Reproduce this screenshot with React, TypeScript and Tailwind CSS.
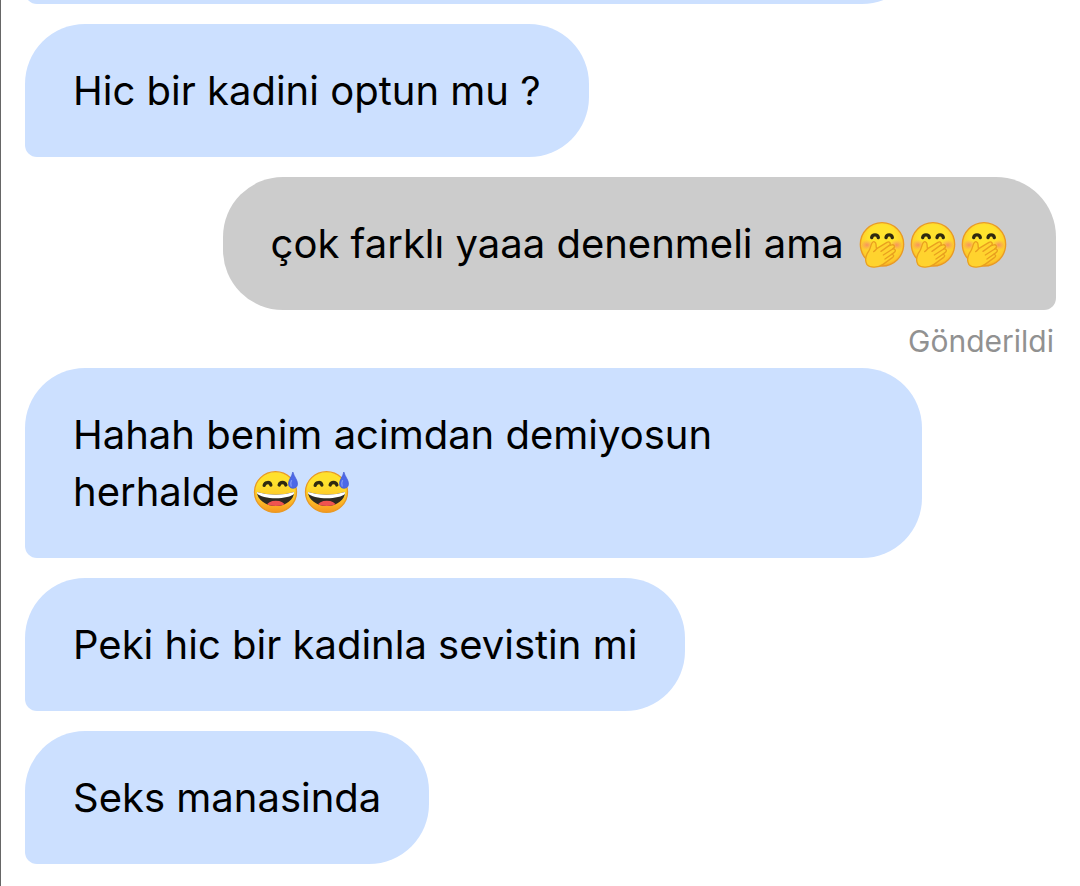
import { ReactNode } from "react"

const Eyes = ({ left, right }: { left: string; right: string }) => (
  <g fill="none" stroke="#2f2a10" strokeWidth="10" strokeLinecap="round">
    <path d={left} />
    <path d={right} />
  </g>
)

const Giggle = () => (
  <svg className="mb-1 inline-block h-[46px] w-[51px] pl-1 pr-px align-middle" viewBox="0 0 138 138" role="img" aria-label="🤭">
    <defs>
      <radialGradient id="giggle-face" cx="50%" cy="38%" r="64%">
        <stop offset="0.5" stopColor="#ffe22e" />
        <stop offset="0.85" stopColor="#fdc82b" />
        <stop offset="1" stopColor="#f8a51f" />
      </radialGradient>
      <radialGradient id="giggle-blush">
        <stop offset="0" stopColor="#f5806a" stopOpacity="0.8" />
        <stop offset="1" stopColor="#f5906a" stopOpacity="0" />
      </radialGradient>
    </defs>
    <circle cx="69" cy="67" r="65" fill="url(#giggle-face)" stroke="#e99a24" strokeWidth="4" />
    <ellipse cx="24" cy="69" rx="20" ry="16" fill="url(#giggle-blush)" />
    <ellipse cx="113" cy="69" rx="20" ry="16" fill="url(#giggle-blush)" />
    <Eyes left="M38 47C40 36 56 36 58 47" right="M81 47C83 36 98 36 100 47" />
    <path
      d="M24 128C17 116 21 99 30 86C35 78 35 70 39 63C43 56 51 59 51 67C52 74 51 77 53 80L84 61C91 57 98 65 90 71L97 69C105 66 110 74 103 79L101 81C109 79 112 87 105 92L98 97C105 97 106 103 100 107L72 127C58 137 34 139 24 128Z"
      fill="#ffd32e"
      stroke="#e9a01f"
      strokeWidth="4"
      strokeLinejoin="round"
    />
    <path d="M53 80C50 84 48 87 44 89M90 71L66 88M101 81L73 99M98 97L78 111" fill="none" stroke="#e9a01f" strokeWidth="4" strokeLinecap="round" />
  </svg>
)

const Sweat = () => (
  <svg className="mb-1 inline-block h-[46px] w-[51px] px-[2px] align-middle" viewBox="0 0 138 138" role="img" aria-label="😅">
    <defs>
      <linearGradient id="sweat-face" x1="0" y1="0" x2="0" y2="1">
        <stop offset="0.3" stopColor="#ffe12d" />
        <stop offset="0.65" stopColor="#fdc42a" />
        <stop offset="1" stopColor="#f7961e" />
      </linearGradient>
      <clipPath id="sweat-mouth">
        <path d="M10 66Q67 83 122 66C121 89 98 108 67 108S12 89 10 66Z" />
      </clipPath>
    </defs>
    <ellipse cx="66" cy="66" rx="63" ry="61" fill="url(#sweat-face)" stroke="#e99a24" strokeWidth="4" />
    <Eyes left="M32 46C35 35 50 35 52 45" right="M77 45C80 35 94 35 97 45" />
    <g clipPath="url(#sweat-mouth)">
      <rect x="8" y="58" width="118" height="54" fill="#2d2922" />
      <path d="M8 58H126V69C105 90 29 90 8 69Z" fill="#fff" />
      <ellipse cx="67" cy="107" rx="27" ry="15" fill="#ef5350" />
    </g>
    <path d="M118 6C122 21 133 30 132 43C131 59 106 59 105 43C104 30 115 21 118 6Z" fill="#4c68e8" stroke="#3d55d0" strokeWidth="2" />
    <path d="M114 32C110 39 111 44 113 48" fill="none" stroke="#7f95f5" strokeWidth="4" strokeLinecap="round" />
  </svg>
)

const Bubble = ({ mine, full, children }: { mine?: boolean; full?: boolean; children?: ReactNode }) => (
  <div
    className={`min-h-[133px] max-w-[87%] shrink-0 px-12 py-[38px] ${full ? "w-[87%]" : ""} ${
      mine ? "self-end rounded-[60px] rounded-br-xl bg-[#cccccc]" : "self-start rounded-[60px] rounded-bl-xl bg-[#cce0ff]"
    }`}
  >
    <p className="text-[40px] leading-[57px] text-black">{children}</p>
  </div>
)

export default function App() {
  return (
    <main className="min-h-screen overflow-hidden border-l border-[#666666] bg-white px-6 pb-[22px] font-['Inter','Liberation_Sans',sans-serif]">
      <div className="flex h-1 flex-col justify-end overflow-hidden">
        <Bubble full />
      </div>
      <div className="mt-5 flex flex-col gap-5">
        <Bubble>Hic bir kadini optun mu ?</Bubble>
        <div className="flex flex-col">
          <Bubble mine>
            çok farklı yaaa denenmeli ama <Giggle /><Giggle /><Giggle />
          </Bubble>
          <span className="mt-3 -mb-3 self-end pr-[2px] text-[30px] leading-[38px] text-[#919191]">Gönderildi</span>
        </div>
        <Bubble full>
          Hahah benim acimdan demiyosun
          <br />
          herhalde <Sweat /><Sweat />
        </Bubble>
        <Bubble>Peki hic bir kadinla sevistin mi</Bubble>
        <Bubble>Seks manasinda</Bubble>
      </div>
    </main>
  )
}
